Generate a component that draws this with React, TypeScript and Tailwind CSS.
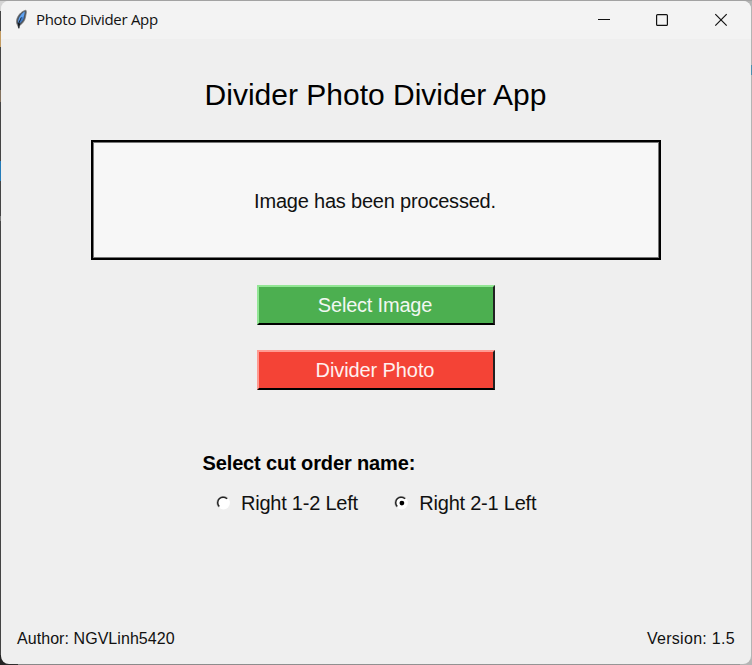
import React from "react";

function Feather() {
  return (
    <svg width="14" height="22" viewBox="0 0 14 22" className="shrink-0">
      <path d="M12 1.2 C8.5 1.7 4.6 5 3 9.5 C2.2 12 2.3 14.5 3.6 16.4 L4.9 19.6 L5.8 16.4 C8.8 14.5 11 11.5 11.6 7.8 C11.9 5.5 12.9 3 12 1.2 Z" fill="#4c5560" stroke="#777" strokeWidth="0.7" />
      <path d="M10.8 2.5 C8.2 3.8 5.2 7.5 4.2 11.5 L4.6 13.8 C8 12.5 10.3 8.5 10.8 2.5 Z" fill="#5ea2f2" />
      <path d="M8.2 8.2 L4.4 13 L4.8 14.6 C7.6 13.4 9.5 10.5 10.2 8 Z" fill="#3f7ccc" />
      <path d="M7.4 8.4 L6.5 10.2 L4.9 14 L4.8 19" fill="none" stroke="#101820" strokeWidth="0.9" />
      <path d="M3.5 13.5 L6.3 15 L4.8 17.5 Z" fill="#15191e" />
    </svg>
  );
}

function TitleBar() {
  return (
    <header className="flex h-[38px] shrink-0 items-start bg-[#f3f3f3]">
      <div className="flex h-[38px] flex-1 items-center pl-[13px]">
        <Feather />
        <span className="ml-2 whitespace-nowrap pb-[2px] font-['Open_Sans','Noto_Sans',sans-serif] text-[15px] tracking-[-0.3px] text-[#111]">Photo Divider App</span>
      </div>
      <svg width="153" height="38" viewBox="0 0 153 38" fill="none" stroke="#111" strokeWidth="1.2">
        <path d="M0 18.5H12" strokeWidth="1" />
        <rect x="58.6" y="13.6" width="10.8" height="10.8" rx="1" />
        <path d="M117.3 13.2L128.7 24.6M128.7 13.2L117.3 24.6" />
      </svg>
    </header>
  );
}

function Radio({ checked, label }: { checked: boolean; label: string }) {
  return (
    <label className="flex items-center">
      <svg width="15" height="15" viewBox="0 0 15 15" className="mr-[10.5px] shrink-0">
        <circle cx="7.5" cy="7" r="6.4" fill="#fff" />
        <path d="M2.8 11.4A6.2 6.2 0 0 1 11.9 2.3" fill="none" stroke="#aaa" strokeWidth="1" />
        <path d="M3.3 10.5A5.2 5.2 0 0 1 11 2.8" fill="none" stroke="#222" strokeWidth="1.5" />
        {checked && <circle cx="7.9" cy="7.1" r="2.4" fill="#000" />}
      </svg>
      <span className="whitespace-nowrap text-[20px] leading-6 tracking-[-0.23px] text-[#111]">{label}</span>
    </label>
  );
}

export default function App() {
  return (
    <div className="relative flex h-[665px] w-[752px] overflow-hidden bg-[#c6c6c6] bg-[linear-gradient(90deg,#222_0,#333_18px,#888_18px,#999_100%)] p-px font-['Liberation_Sans',Arial,sans-serif]">
      <div className="absolute inset-x-0 top-0 h-[11px] bg-[linear-gradient(#a2a2a2_0,#a2a2a2_1px,#d4d4d4_1px)]" />
      <div className="absolute left-0 top-[11px] h-[644px] w-px bg-[linear-gradient(#444_0,#444_20px,#c39b61_20px,#c39b61_36px,#444_36px,#444_79px,#81705d_79px,#81705d_91px,#444_91px,#444_150px,#247bb8_150px,#247bb8_170px,#444_170px,#444_205px,#777_205px,#777_210px,#444_210px)]" />
      <div className="absolute bottom-0 right-0 top-[1px] w-3 bg-[linear-gradient(#b4b4b4_0,#b4b4b4_64px,#4a8fae_64px,#4a8fae_74px,#b4b4b4_74px)]" />
      <main className="relative flex h-[663px] w-[750px] flex-col overflow-hidden rounded-lg bg-[#efefef]">
        <TitleBar />
        <div className="flex flex-1 flex-col items-center">
          <h1 className="mt-[38px] whitespace-nowrap pr-px text-[30px] leading-9 text-black">Divider Photo Divider App</h1>
          <section className="mt-[27px] flex h-[120px] w-[570px] shrink-0 items-center justify-center border-2 border-black bg-[#f7f7f7] text-[20px] text-[#111] shadow-[inset_0_0_0_1px_#777]">
            <span className="whitespace-nowrap pr-[2px] pt-px tracking-[-0.2px]">Image has been processed.</span>
          </section>
          <button className="mt-[25px] h-10 w-[238px] shrink-0 border-2 border-b-black border-l-[#92e695] border-r-[#222] border-t-[#92e695] bg-[#4caf50] pr-[2px] text-[20px] tracking-[-0.2px] text-[#f2f7f2]">Select Image</button>
          <button className="mt-[25px] h-10 w-[238px] shrink-0 border-2 border-b-black border-l-[#ff9b92] border-r-[#222] border-t-[#ff9b92] bg-[#f44336] pr-[2px] text-[20px] tracking-[-0.1px] text-[#fff0ef]">Divider Photo</button>
          <div className="mt-[61px] w-[347px]">
            <h2 className="whitespace-nowrap text-[20px] font-bold leading-6 tracking-[-0.13px] text-black">Select cut order name:</h2>
            <div className="mt-4 flex gap-9 pl-[13px]">
              <Radio checked={false} label="Right 1-2 Left" />
              <Radio checked label="Right 2-1 Left" />
            </div>
          </div>
        </div>
        <footer className="flex h-[50px] shrink-0 justify-between px-4 text-[16px] leading-[50px] text-[#111]">
          <span className="tracking-[0.06px]">Author: NGVLinh5420</span>
          <span className="tracking-[0.3px]">Version: 1.5</span>
        </footer>
      </main>
    </div>
  );
}
